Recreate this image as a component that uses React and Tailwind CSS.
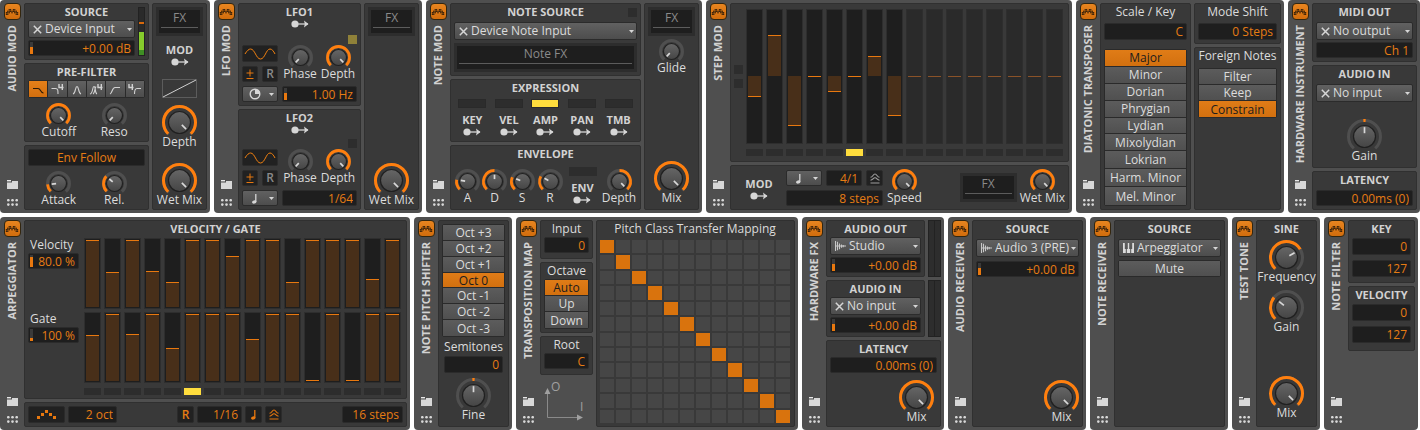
import React from "react";

const cx = (...names) => names.filter(Boolean).join(" ");

/* ---------- icons ---------- */

// dot matrix of the power button, one string per row
const logoDots = [
  "..##.##..",
  ".#######.",
  "###.#.###",
  "##.....##",
];

const LogoIcon = () => (
  <svg viewBox="0 0 16 16" className="w-4 h-4 shrink-0">
    {logoDots.map((row, y) =>
      row.split("").map((c, x) =>
        c === "#" ? <circle key={`${x}-${y}`} cx={2.4 + x * 1.4} cy={5.8 + y * 1.5} r="0.72" fill="#2a1a08" /> : null
      )
    )}
  </svg>
);

const FolderIcon = () => (
  <svg viewBox="0 0 11 9" className="w-[11px] h-[9px]">
    <rect x="0" y="0" width="4" height="1.4" fill="#e8e8e8" />
    <path d="M0 2.4H5V1H11V9H0Z" fill="#d8d8d8" />
  </svg>
);

const GridIcon = () => (
  <svg viewBox="0 0 11 7" className="w-[11px] h-[7px]" fill="#d8d8d8">
    {[1.3, 5.5, 9.7].map((x) => [1.2, 5.6].map((y) => <circle key={`${x}${y}`} cx={x} cy={y} r="1.3" />))}
  </svg>
);

const ModIcon = () => (
  <svg viewBox="0 0 18 8" className="w-[18px] h-2 shrink-0">
    <circle cx="4" cy="4" r="3.6" fill="#d6d6d6" />
    <path d="M7 4H17" stroke="#d6d6d6" strokeWidth="1.3" />
    <path d="M13 0.4L17.500 4L13 7.600L13.800 4Z" fill="#d6d6d6" />
  </svg>
);

const CrossIcon = () => (
  <svg viewBox="0 0 9 9" className="w-[9px] h-[9px] shrink-0">
    <path d="M0.8 0.8L8.2 8.2M8.2 0.8L0.8 8.2" stroke="#d6d6d6" strokeWidth="1.5" />
  </svg>
);

const WaveIcon = () => (
  <svg viewBox="0 0 11 10" className="w-[11px] h-[10px] shrink-0">
    <path
      d="M0.5 0V10M2.5 0.8V9.2M4.5 2.4V8.2M6.5 3.4V6.8M8.2 4V6.2M0 5H11"
      stroke="#c8c8c8"
      strokeWidth="1.1"
      fill="none"
    />
  </svg>
);

const KeysIcon = () => (
  <svg viewBox="0 0 11 10" className="w-[11px] h-[10px] shrink-0">
    <path d="M0 0H1.8V6H2.8V10H0ZM4.8 0H6.2V6H7.2V10H3.8V6H4.8ZM9.2 0H11V10H8.2V6H9.2Z" fill="#dcdcdc" />
  </svg>
);

const NoteIcon = ({ color = "#d6d6d6" }) => (
  <svg viewBox="0 0 8 11" className="w-2 h-[11px]">
    <ellipse cx="3.2" cy="9" rx="2.2" ry="1.6" fill={color} transform="rotate(-15 3.2 9)" />
    <path d="M4.8 9V1" stroke={color} strokeWidth="1.3" />
  </svg>
);

const ClockIcon = () => (
  <svg viewBox="0 0 12 12" className="w-3 h-3">
    <circle cx="6" cy="6" r="4.8" fill="none" stroke="#d6d6d6" strokeWidth="1.4" />
    <path d="M6 6V1A5 5 0 0 1 11 6Z" fill="#d6d6d6" />
  </svg>
);

const ShuffleIcon = ({ color = "#a0a0a0" }) => (
  <svg viewBox="0 0 10 11" className="w-[10px] h-[11px]" fill="none" stroke={color} strokeWidth="1.1">
    <path d="M0.5 4.2C3 4.2 3 1 5 1S7 4.2 9.5 4.2M0.5 7.2C3 7.2 3 4.8 5 4.8S7 7.2 9.5 7.2M0.5 10H9.5" />
  </svg>
);

const SineIcon = () => (
  <svg viewBox="0 0 32 12" className="w-8 h-3" fill="none" stroke="#f08010" strokeWidth="1">
    <path d="M1 6C3 2.5 5 1 6.5 1C11 1 12 11 16.5 11S22 1 26 1C28 1 29.5 3 31 6" />
  </svg>
);

const PlusMinusIcon = () => (
  <svg viewBox="0 0 8 10" className="w-2 h-[10px]" fill="none" stroke="#e8780f" strokeWidth="1">
    <path d="M4 0.5V7.500M0.5 4H7.500M0.5 9.500H7.500" />
  </svg>
);

const PatternIcon = () => (
  <svg viewBox="0 0 20 9" className="w-5 h-[9px]" fill="#e8780f">
    {[[0, 6], [4, 3], [8, 0], [12, 3], [16, 6]].map(([x, y]) => (
      <rect key={x} x={x} y={y} width="3" height="3" />
    ))}
  </svg>
);

const Caret = () => (
  <svg viewBox="0 0 5 3" className="w-[5px] h-[3px] -ml-2 shrink-0 pointer-events-none">
    <path d="M0 0H5L2.5 3Z" fill="#d6d6d6" />
  </svg>
);

/* ---------- building blocks ---------- */

const Module = ({ name, children }) => (
  <section className="flex min-w-0 min-h-[213px] rounded bg-[#4f4f4f]">
    <div className="w-6 shrink-0 flex flex-col items-center pt-[3px] pb-[7px]">
      <button
        aria-label={`${name} on`}
        className="w-[17px] h-[17px] flex items-center justify-center rounded-sm border border-[#33260f] bg-linear-to-b from-[#e8851f] to-[#d26d0c]"
      >
        <LogoIcon />
      </button>
      <h2 className="mt-[5px] [writing-mode:vertical-rl] rotate-180 text-[11px] leading-4 font-bold whitespace-nowrap text-[#d2d2d2]">
        {name}
      </h2>
      <button aria-label={`${name} presets`} className="mt-auto">
        <FolderIcon />
      </button>
      <button aria-label={`${name} pages`} className="mt-[10px]">
        <GridIcon />
      </button>
    </div>
    <div className="flex-1 min-w-0 flex gap-[3px] py-[3px] pr-[3px]">{children}</div>
  </section>
);

const Panel = ({ className, children }) => (
  <div className={cx("min-w-0 flex flex-col px-[3px] border border-[#303030] rounded-xs bg-[#393939]", className)}>
    {children}
  </div>
);

const Title = ({ plain, className, children }) => (
  <h3
    className={cx(
      "h-4 leading-4 text-center whitespace-nowrap",
      plain ? "text-xs font-normal text-[#dcdcdc]" : "text-[11px] font-bold text-[#d2d2d2]",
      className
    )}
  >
    {children}
  </h3>
);

const Led = ({ className }) => <div className={cx("w-[9px] h-[9px] shrink-0", className || "bg-[#2d2d2d]")} />;

// level draws the small vertical bar in front of the value
const Field = ({ label, value, level, center, className }) => (
  <div className={cx("min-w-0 flex items-center rounded-xs border border-[#2b2b2b] bg-[#1e1e1e]", className || "h-4")}>
    {level !== undefined && (
      <div className="w-[3px] h-3 ml-px shrink-0 flex flex-col justify-end bg-[#3a3a3a]">
        <div className="bg-[#e8780f]" style={{ height: `${level * 100}%` }} />
      </div>
    )}
    <input
      aria-label={label}
      defaultValue={value}
      className={cx(
        "w-full min-w-0 h-full px-[3px] bg-transparent outline-none text-xs text-[#e67c14]",
        center ? "text-center" : "text-right"
      )}
    />
  </div>
);

const Select = ({ label, icon, value, className }) => (
  <div
    className={cx(
      "min-w-0 h-[18px] flex items-center gap-[3px] pl-1 pr-0.5 rounded-xs border border-[#2b2b2b] bg-linear-to-b from-[#616161] to-[#4d4d4d]",
      className
    )}
  >
    {icon}
    <select aria-label={label} className="flex-1 min-w-0 appearance-none bg-transparent outline-none text-xs leading-4 text-[#dcdcdc]">
      <option>{value}</option>
    </select>
    <Caret />
  </div>
);

// drop-down that shows only its icon
const IconSelect = ({ label, icon, value }) => (
  <div className="relative w-9 h-4 shrink-0 flex items-center justify-between pl-1.5 pr-[3px] rounded-xs border border-[#2b2b2b] bg-linear-to-b from-[#616161] to-[#4d4d4d]">
    {icon}
    <Caret />
    <select aria-label={label} className="absolute inset-0 w-full opacity-0">
      <option>{value}</option>
    </select>
  </div>
);

const DarkButton = ({ label, className, children }) => (
  <button
    aria-label={label}
    className={cx(
      "shrink-0 flex items-center justify-center rounded-xs border border-[#2b2b2b] bg-[#212121] text-xs leading-none font-semibold",
      className
    )}
  >
    {children}
  </button>
);

const ButtonList = ({ items, active, className }) => (
  <div className={cx("grid rounded-xs border border-[#2a2a2a] divide-y divide-[#2a2a2a]", className)}>
    {items.map((item) => (
      <button
        key={item}
        aria-pressed={item === active}
        className={cx(
          "min-h-0 text-xs leading-[15px] text-center",
          item === active
            ? "bg-linear-to-b from-[#e07c17] to-[#d2700f] text-[#1c1c1c]"
            : "bg-linear-to-b from-[#5c5c5c] to-[#505050] text-[#dcdcdc]"
        )}
      >
        {item}
      </button>
    ))}
  </div>
);

const FxSlot = ({ name = "FX", className }) => (
  <button
    className={cx(
      "h-[29px] flex flex-col justify-between px-0.5 pb-[5px] border-3 border-[#2d2d2d] bg-[#1e1e1e] text-xs leading-4 text-[#8a8a8a]",
      className
    )}
  >
    <span className="w-full text-center">{name}</span>
    <span className="w-full h-px bg-[#5c5c5c]" />
  </button>
);

const ModTarget = ({ name }) => (
  <div className="flex flex-col items-center">
    {name && <Title>{name}</Title>}
    <ModIcon />
  </div>
);

const polar = (c, r, deg) => {
  const a = ((deg - 90) * Math.PI) / 180;
  return `${(c + r * Math.cos(a)).toFixed(2)} ${(c + r * Math.sin(a)).toFixed(2)}`;
};

const arc = (c, r, from, to) =>
  `M${polar(c, r, from)}A${r} ${r} 0 ${to - from > 180 ? 1 : 0} 1 ${polar(c, r, to)}`;

// value goes from 0 to 1, a bipolar knob fills from its centre
const Knob = ({ label, value, big, bipolar, className }) => {
  const size = big ? 35 : 25;
  const c = size / 2;
  const ring = c - 1.5;
  const cap = big ? 11 : 8;
  const angle = -135 + value * 270;
  let from = -135;
  let to = angle;
  if (bipolar) {
    from = Math.min(0, angle) - (value === 0.5 ? 4 : 0);
    to = Math.max(0, angle) + (value === 0.5 ? 4 : 0);
  }
  return (
    <label className={cx("relative flex flex-col items-center", className)}>
      <svg viewBox={`0 0 ${size} ${size}`} className={cx("overflow-visible", big ? "w-[35px] h-[35px] -mb-1.5" : "w-[25px] h-[25px] -mb-1")}>
        <defs>
          <linearGradient id="cap" x1="0" y1="0" x2="0" y2="1">
            <stop offset="0" stopColor="#666" />
            <stop offset="1" stopColor="#454545" />
          </linearGradient>
        </defs>
        <path d={arc(c, ring, -138, 138)} fill="none" stroke="#4f4f4f" strokeWidth="3" />
        {value > 0 && <path d={arc(c, ring, from, to)} fill="none" stroke="#ff7f0e" strokeWidth={big ? 3 : 2.8} />}
        <circle cx={c} cy={c} r={cap} fill="url(#cap)" stroke="#202020" strokeWidth="1.2" />
        <path d={`M${polar(c, cap * 0.3, angle)}L${polar(c, cap * 0.85, angle)}`} stroke="#d8d8d8" strokeWidth="1.7" />
      </svg>
      <input type="range" min="0" max="1" step="0.01" defaultValue={value} className="sr-only" />
      <span className="h-4 text-xs leading-4 whitespace-nowrap text-[#dcdcdc]">{label}</span>
    </label>
  );
};

const barFrame = "min-w-0 flex-1 flex flex-col px-px py-px border border-[#2e2e2e]";

const GateBars = ({ values }) => (
  <div className="h-[71px] flex gap-[3px]">
    {values.map((v, i) => (
      <div key={i} className={cx(barFrame, "justify-end bg-[#1e1e1e]")}>
        <div className="min-h-px border-t border-[#e8780f] bg-[#482f19]" style={{ height: `${v * 100}%` }} />
      </div>
    ))}
  </div>
);

const StepBars = ({ values }) => (
  <div className="flex-1 h-[135px] flex gap-[3px]">
    {values.map((v, i) => {
      const off = v === null;
      return (
        <div key={i} className={cx(barFrame, off ? "bg-[#2a2a2a]" : "bg-[#1e1e1e]")}>
          <div style={{ height: `${49.5 - Math.max(v || 0, 0) * 50}%` }} />
          <div
            className={cx(
              "min-h-px bg-[#482f19]",
              v < 0 ? "border-b" : "border-t",
              off ? "border-[#8a5228]" : "border-[#e8780f]"
            )}
            style={{ height: `${Math.abs(v || 0) * 50}%` }}
          />
        </div>
      );
    })}
  </div>
);

const StepLeds = ({ count, active, className }) => (
  <div className={cx("h-[7px] flex gap-[3px]", className)}>
    {Array.from({ length: count }, (_, i) => (
      <div key={i} className={cx("flex-1", i === active ? "bg-[#ffdd3d]" : "bg-[#2d2d2d]")} />
    ))}
  </div>
);

/* ---------- modules ---------- */

const filterCurves = [
  { name: "Low-pass 2", d: "M4 7.500H9C12 7.500 11 12 14.500 12" },
  { name: "Low-pass 4", d: "M3.500 7.500H7.500C10 7.500 10 9.500 10 13", four: 11 },
  { name: "Band-pass 2", d: "M5 13C8 12 7 5.500 9 5.500S10 12 13 13" },
  { name: "Band-pass 4", d: "M3 13C6.500 12 5 5.500 7 5.500S7.500 12 10 13M6 13C8 12 7.500 8 9 5.500", four: 11 },
  { name: "High-pass 2", d: "M4 13C6.500 12 6 6.500 9 6.500H14" },
  { name: "High-pass 4", d: "M8.500 13C8.500 9 9 7.500 11 7.500H15", four: 3 },
];

const AudioMod = () => (
  <Module name="AUDIO MOD">
    <div className="flex-1 min-w-0 grid grid-rows-[57fr_79fr_65fr] gap-[3px]">
      <Panel>
        <div className="grid grid-cols-[1fr_7px] gap-x-[3px]">
          <Title className="col-span-2 row-start-1 col-start-1">SOURCE</Title>
          <Select label="Source" icon={<CrossIcon />} value="Device Input" className="row-start-2" />
          <Field label="Source gain" value="+0.00 dB" level={0.55} className="row-start-3 h-4 mt-0.5" />
          <div className="col-start-2 row-start-1 row-span-3 mt-[3px] flex flex-col border border-[#222] bg-[#2a2a2a]">
            <div className="h-[14px]" />
            <div className="h-0.5 bg-[#d8690c]" />
            <div className="h-2" />
            <div className="flex-1 bg-[#86cc2c]" />
            <div className="h-[5px] bg-[#3f8f24]" />
          </div>
        </div>
      </Panel>
      <Panel>
        <Title>PRE-FILTER</Title>
        <div className="h-[18px] flex border border-[#2a2a2a] divide-x divide-[#2a2a2a] rounded-xs">
          {filterCurves.map((f, i) => (
            <button
              key={f.name}
              aria-label={f.name}
              className={cx(
                "flex-1 min-w-0 flex items-center justify-center",
                i === 0
                  ? "bg-linear-to-b from-[#e58019] to-[#d26f0f]"
                  : "bg-linear-to-b from-[#616161] to-[#4d4d4d]"
              )}
            >
              <svg viewBox="0 0 18 16" className="w-[18px] h-4 shrink-0" fill="none" stroke={i === 0 ? "#2a1a08" : "#d2d2d2"}>
                <path d={f.d} strokeWidth="1.1" />
                {f.four && <path d={`M${f.four} 3V6.500H${f.four + 4.5}M${f.four + 3.3} 3V9`} strokeWidth="1.4" />}
              </svg>
            </button>
          ))}
        </div>
        <div className="grid grid-cols-2 px-[3px] mt-[5px]">
          <Knob label="Cutoff" value={1} />
          <Knob label="Reso" value={0} />
        </div>
      </Panel>
      <Panel className="pt-[3px]">
        <Field label="Modulation mode" value="Env Follow" center className="h-[17px]" />
        <div className="grid grid-cols-2 px-[3px] mt-[5px]">
          <Knob label="Attack" value={0.15} />
          <Knob label="Rel." value={0.32} />
        </div>
      </Panel>
    </div>
    <Panel className="w-[55px] pt-[3px] pb-px">
      <FxSlot />
      <div className="mt-1.5">
        <ModTarget name="MOD" />
      </div>
      <svg viewBox="0 0 35 19" className="mt-[13px] w-[35px] h-[19px] self-center">
        <rect x="0.5" y="0.5" width="34" height="18" fill="none" stroke="#5c5c5c" />
        <path d="M1 18L34 1" stroke="#d0d0d0" />
      </svg>
      <Knob label="Depth" value={1} big className="mt-[7px]" />
      <Knob label="Wet Mix" value={1} big className="mt-auto" />
    </Panel>
  </Module>
);

const LfoPanel = ({ name, lit, icon, timebase, rate, level }) => (
  <Panel className="pb-[3px]">
    <Title>{name}</Title>
    <ModTarget />
    <Led className={cx("mt-auto self-end", lit ? "bg-[#8f8139]" : "bg-[#2d2d2d]")} />
    <div className="mt-px flex">
      <div className="w-9 shrink-0 flex flex-col gap-1">
        <DarkButton label={`${name} shape`} className="h-[17px]">
          <SineIcon />
        </DarkButton>
        <div className="flex gap-1">
          <DarkButton label={`${name} bipolar`} className="w-4 h-4">
            <PlusMinusIcon />
          </DarkButton>
          <DarkButton className="w-4 h-4 text-[#8a8a8a]">R</DarkButton>
        </div>
      </div>
      <div className="flex-1 min-w-0 ml-[3px] grid grid-cols-2">
        <Knob label="Phase" value={0} />
        <Knob label="Depth" value={1} />
      </div>
    </div>
    <div className="mt-1 flex gap-1">
      <IconSelect label={`${name} timebase`} icon={icon} value={timebase} />
      <Field label={`${name} rate`} value={rate} level={level} className="flex-1 h-4" />
    </div>
  </Panel>
);

const LfoMod = () => (
  <Module name="LFO MOD">
    <div className="flex-1 min-w-0 grid grid-rows-[103fr_101fr] gap-[3px]">
      <LfoPanel name="LFO1" lit icon={<ClockIcon />} timebase="Hertz" rate="1.00 Hz" level={0.55} />
      <LfoPanel name="LFO2" icon={<span className="pl-0.5"><NoteIcon /></span>} timebase="Beats" rate="1/64" />
    </div>
    <Panel className="w-[55px] pt-[3px] pb-px">
      <FxSlot />
      <Knob label="Wet Mix" value={1} big className="mt-auto" />
    </Panel>
  </Module>
);

const NoteMod = () => (
  <Module name="NOTE MOD">
    <div className="flex-1 min-w-0 grid grid-rows-[73fr_63fr_65fr] gap-[3px]">
      <Panel>
        <div className="flex items-center">
          <Title className="flex-1 pl-[9px]">NOTE SOURCE</Title>
          <Led />
        </div>
        <Select label="Note source" icon={<CrossIcon />} value="Device Note Input" className="mt-0.5" />
        <FxSlot name="Note FX" className="mt-[3px]" />
      </Panel>
      <Panel>
        <Title>EXPRESSION</Title>
        <div className="mt-[3px] grid grid-cols-5">
          {["KEY", "VEL", "AMP", "PAN", "TMB"].map((name) => (
            <div key={name} className="flex flex-col items-center gap-1">
              <div className={cx("w-7 h-[9px] border border-[#2a2a2a]", name === "AMP" ? "bg-[#ffdd3d]" : "bg-[#2d2d2d]")} />
              <ModTarget name={name} />
            </div>
          ))}
        </div>
      </Panel>
      <Panel className="pb-[3px]">
        <Title>ENVELOPE</Title>
        <div className="mt-auto grid grid-cols-[27fr_27fr_28fr_28fr_37fr_36fr] items-end">
          <Knob label="A" value={0.2} />
          <Knob label="D" value={0.5} />
          <Knob label="S" value={0.25} />
          <Knob label="R" value={0.27} />
          <div className="flex flex-col items-center gap-1 pb-0.5">
            <div className="w-7 h-[9px] bg-[#2d2d2d]" />
            <ModTarget name="ENV" />
          </div>
          <Knob label="Depth" value={1} bipolar />
        </div>
      </Panel>
    </div>
    <Panel className="w-[55px] py-[3px]">
      <FxSlot />
      <Knob label="Glide" value={0} className="mt-[3px]" />
      <Knob label="Mix" value={1} big className="mt-auto" />
    </Panel>
  </Module>
);

const stepValues = [-0.32, 0.63, -0.76, 0, -0.24, 0, 0.31, -0.61, null, null, null, null, null, null, null, null];

const StepMod = () => (
  <Module name="STEP MOD">
    <div className="flex-1 min-w-0 flex flex-col gap-[3px]">
      <Panel className="flex-1 pt-[5px] pr-[5px]">
        <div className="flex items-center gap-[3px]">
          <div className="flex flex-col gap-[5px]">
            <Led />
            <Led />
          </div>
          <StepBars values={stepValues} />
        </div>
        <StepLeds count={16} active={5} className="mt-[5px] ml-3" />
      </Panel>
      <Panel className="py-[3px]">
        <div className="flex items-end">
          <div className="w-[50px] self-center">
            <ModTarget name="MOD" />
          </div>
          <div className="w-[97px] ml-0.5 flex flex-col gap-1">
            <div className="flex gap-1">
              <IconSelect label="Timebase" icon={<span className="pl-0.5"><NoteIcon /></span>} value="Beats" />
              <Field label="Rate" value="4/1" className="flex-1 h-4" />
              <DarkButton label="Shuffle" className="w-[17px] h-4">
                <ShuffleIcon />
              </DarkButton>
            </div>
            <Field label="Step count" value="8 steps" />
          </div>
          <Knob label="Speed" value={1} className="ml-1" />
          <FxSlot className="w-[57px] ml-auto self-center" />
          <Knob label="Wet Mix" value={1} className="ml-[3px]" />
        </div>
      </Panel>
    </div>
  </Module>
);

const scales = ["Major", "Minor", "Dorian", "Phrygian", "Lydian", "Mixolydian", "Lokrian", "Harm. Minor", "Mel. Minor"];

const DiatonicTransposer = () => (
  <Module name="DIATONIC TRANSPOSER">
    <div className="flex-1 min-w-0 grid grid-cols-[91fr_87fr] gap-[3px]">
      <Panel className="pb-[3px]">
        <Title plain>Scale / Key</Title>
        <Field label="Key" value="C" className="mt-[3px] h-[17px]" />
        <ButtonList
          items={scales}
          active="Major"
          className="mt-[9px] flex-1 grid-rows-[repeat(6,17fr)_repeat(3,18fr)]"
        />
      </Panel>
      <div className="min-w-0 flex flex-col gap-[3px]">
        <Panel className="pb-[3px]">
          <Title plain>Mode Shift</Title>
          <Field label="Mode shift" value="0 Steps" className="mt-[3px] h-[17px]" />
        </Panel>
        <Panel className="flex-1">
          <Title plain>Foreign Notes</Title>
          <ButtonList items={["Filter", "Keep", "Constrain"]} active="Constrain" className="mt-1 auto-rows-fr" />
        </Panel>
      </div>
    </div>
  </Module>
);

const HardwareInstrument = () => (
  <Module name="HARDWARE INSTRUMENT">
    <div className="flex-1 min-w-0 grid grid-rows-[59fr_103fr_39fr] gap-[3px]">
      <Panel>
        <Title>MIDI OUT</Title>
        <Select label="MIDI out" icon={<CrossIcon />} value="No output" className="mt-0.5" />
        <Field label="MIDI channel" value="Ch 1" className="mt-0.5 h-4" />
      </Panel>
      <Panel className="pb-[3px]">
        <Title>AUDIO IN</Title>
        <Select label="Audio in" icon={<CrossIcon />} value="No input" className="mt-0.5" />
        <Knob label="Gain" value={0.5} big bipolar className="mt-auto" />
      </Panel>
      <Panel>
        <Title>LATENCY</Title>
        <Field label="Latency" value="0.00ms (0)" className="mt-0.5 h-4" />
      </Panel>
    </div>
  </Module>
);

const velocities = [1, 0.53, 1, 0.54, 0.38, 1, 1, 0.76, 1, 1, 0.38, 1, 1, 1, 0.42, 1];
const gates = [0.69, 1, 0.7, 1, 0.5, 1, 1, 1, 0.62, 1, 1, 0, 1, 0, 1, 1];

const Arpeggiator = () => (
  <Module name="ARPEGGIATOR">
    <div className="flex-1 min-w-0 flex flex-col gap-[3px]">
      <Panel className="flex-1">
        <Title>VELOCITY / GATE</Title>
        <div className="mt-px flex gap-[5px] pr-0.5">
          <div className="w-[51px] shrink-0 grid grid-rows-2 gap-[3px] mb-3 text-xs leading-[13px] text-[#dcdcdc]">
            <div>
              <div className="h-[15px] pl-0.5">Velocity</div>
              <Field label="Velocity" value="80.0 %" level={0.85} />
            </div>
            <div>
              <div className="h-[15px] pl-0.5">Gate</div>
              <Field label="Gate" value="100 %" level={0.25} />
            </div>
          </div>
          <div className="flex-1 min-w-0 flex flex-col gap-[3px]">
            <GateBars values={velocities} />
            <GateBars values={gates} />
            <StepLeds count={16} active={5} className="mt-0.5" />
          </div>
        </div>
      </Panel>
      <Panel className="h-[25px] justify-center">
        <div className="flex justify-between">
          <div className="flex gap-[3px]">
            <DarkButton label="Pattern" className="w-[37px] h-[17px]">
              <PatternIcon />
            </DarkButton>
            <Field label="Octaves" value="2 oct" className="w-[49px] h-[17px]" />
          </div>
          <div className="flex gap-[3px]">
            <DarkButton className="w-[17px] h-[17px] text-[#e67c14]">R</DarkButton>
            <Field label="Rate" value="1/16" className="w-[45px] h-[17px]" />
            <DarkButton label="Beats" className="w-[17px] h-[17px]">
              <NoteIcon color="#e8780f" />
            </DarkButton>
            <DarkButton label="Shuffle" className="w-[17px] h-[17px]">
              <ShuffleIcon color="#e8780f" />
            </DarkButton>
          </div>
          <Field label="Step count" value="16 steps" className="w-[61px] h-[17px]" />
        </div>
      </Panel>
    </div>
  </Module>
);

const octaves = ["Oct +3", "Oct +2", "Oct +1", "Oct 0", "Oct -1", "Oct -2", "Oct -3"];

const NotePitchShifter = () => (
  <Module name="NOTE PITCH SHIFTER">
    <Panel className="flex-1 py-[3px]">
      <ButtonList items={octaves} active="Oct 0" className="h-[113px] auto-rows-fr" />
      <Title plain className="mt-0.5">Semitones</Title>
      <Field label="Semitones" value="0" className="mt-px mx-0.5 h-[17px]" />
      <Knob label="Fine" value={0.5} big bipolar className="mt-auto" />
    </Panel>
  </Module>
);

const TranspositionMap = () => (
  <Module name="TRANSPOSITION MAP">
    <div className="w-[53px] shrink-0 flex flex-col gap-[3px]">
      <Panel className="pb-[5px]">
        <Title plain>Input</Title>
        <Field label="Input" value="0" />
      </Panel>
      <Panel className="pb-[3px]">
        <Title plain>Octave</Title>
        <ButtonList items={["Auto", "Up", "Down"]} active="Auto" className="h-[50px] auto-rows-fr" />
      </Panel>
      <Panel className="pb-[5px]">
        <Title plain>Root</Title>
        <Field label="Root" value="C" />
      </Panel>
      <svg viewBox="0 0 53 49" className="w-[53px] h-[49px]" fill="#a0a0a0">
        <path d="M7.500 14V39.500H38" fill="none" stroke="#8a8a8a" />
        <path d="M7.500 10L10.500 16H4.500ZM43 39.500L37 42.500V36.500Z" />
        <text x="11" y="13" className="text-xs">O</text>
        <text x="40" y="33" className="text-xs">I</text>
      </svg>
    </div>
    <Panel className="flex-1 pb-[3px] pr-1">
      <Title plain>Pitch Class Transfer Mapping</Title>
      <div className="mt-[3px] flex-1 grid grid-cols-12 auto-rows-fr gap-0.5">
        {Array.from({ length: 144 }, (_, i) => {
          const row = Math.floor(i / 12);
          const col = i % 12;
          return (
            <button
              key={i}
              aria-label={`${col} to ${row}`}
              className={row === col ? "bg-[#d9730d]" : "bg-[#464646]"}
            />
          );
        })}
      </div>
    </Panel>
  </Module>
);

const IdleMeter = () => (
  <div className="w-[13px] shrink-0 flex border border-[#222] divide-x divide-[#222] bg-[#2d2d2d]">
    <div className="flex-1" />
    <div className="flex-1" />
  </div>
);

const HardwareFx = () => (
  <Module name="HARDWARE FX">
    <div className="flex-1 min-w-0 grid grid-rows-[57fr_57fr_87fr] gap-[3px]">
      <div className="flex gap-[3px]">
        <Panel className="flex-1">
          <Title>AUDIO OUT</Title>
          <Select label="Audio out" icon={<WaveIcon />} value="Studio" />
          <Field label="Output gain" value="+0.00 dB" level={0.55} className="mt-0.5 h-4" />
        </Panel>
        <IdleMeter />
      </div>
      <div className="flex gap-[3px]">
        <Panel className="flex-1">
          <Title>AUDIO IN</Title>
          <Select label="Audio in" icon={<CrossIcon />} value="No input" />
          <Field label="Input gain" value="+0.00 dB" level={0.55} className="mt-0.5 h-4" />
        </Panel>
        <IdleMeter />
      </div>
      <Panel className="pb-px">
        <Title>LATENCY</Title>
        <Field label="Latency" value="0.00ms (0)" />
        <Knob label="Mix" value={1} big className="mt-auto self-end mr-[3px]" />
      </Panel>
    </div>
  </Module>
);

const AudioReceiver = () => (
  <Module name="AUDIO RECEIVER">
    <Panel className="flex-1 pb-px">
      <Title>SOURCE</Title>
      <Select label="Source" icon={<WaveIcon />} value="Audio 3 (PRE)" className="mt-0.5" />
      <Field label="Source gain" value="+0.00 dB" level={0.55} className="mt-1 h-4" />
      <Knob label="Mix" value={1} big className="mt-auto self-end" />
    </Panel>
  </Module>
);

const NoteReceiver = () => (
  <Module name="NOTE RECEIVER">
    <Panel className="flex-1">
      <Title>SOURCE</Title>
      <Select label="Source" icon={<KeysIcon />} value="Arpeggiator" className="mt-0.5" />
      <ButtonList items={["Mute"]} className="mt-[3px] h-[17px]" />
    </Panel>
  </Module>
);

const TestTone = () => (
  <Module name="TEST TONE">
    <Panel className="flex-1 pb-[5px]">
      <Title>SINE</Title>
      <Knob label="Frequency" value={0.72} big className="mt-[3px]" />
      <Knob label="Gain" value={0.31} big className="mt-[5px]" />
      <Knob label="Mix" value={1} big className="mt-auto" />
    </Panel>
  </Module>
);

const NoteFilter = () => (
  <Module name="NOTE FILTER">
    <div className="flex-1 min-w-0 flex flex-col gap-[3px]">
      <Panel className="pb-[5px]">
        <Title>KEY</Title>
        <Field label="Lowest key" value="0" className="mt-px h-[17px]" />
        <Field label="Highest key" value="127" className="mt-[5px] h-[17px]" />
      </Panel>
      <Panel className="pb-[7px]">
        <Title>VELOCITY</Title>
        <Field label="Lowest velocity" value="0" className="mt-px h-[17px]" />
        <Field label="Highest velocity" value="127" className="mt-[5px] h-[17px]" />
      </Panel>
    </div>
  </Module>
);

const App = () => {
  return (
    <main className="flex flex-col gap-1 bg-white font-['Open_Sans',sans-serif]">
      <div className="grid grid-cols-[210fr_208fr_276fr_366fr_208fr_132fr] gap-1">
        <AudioMod />
        <LfoMod />
        <NoteMod />
        <StepMod />
        <DiatonicTransposer />
        <HardwareInstrument />
      </div>
      <div className="grid grid-cols-[410fr_98fr_282fr_142fr_138fr_138fr_88fr_94fr] gap-1 pr-0.5">
        <Arpeggiator />
        <NotePitchShifter />
        <TranspositionMap />
        <HardwareFx />
        <AudioReceiver />
        <NoteReceiver />
        <TestTone />
        <NoteFilter />
      </div>
    </main>
  );
};

export default App;
